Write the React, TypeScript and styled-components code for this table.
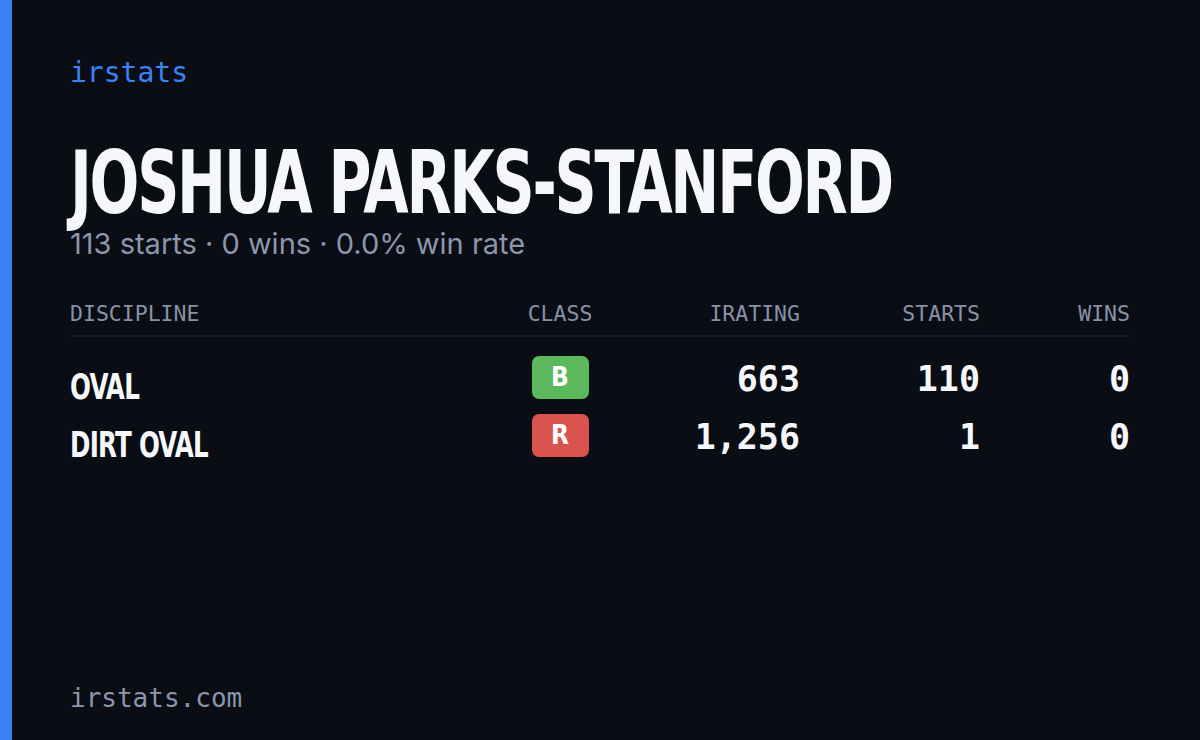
import React from "react";
import styled, { createGlobalStyle } from "styled-components";

const Global = createGlobalStyle`
  html, body { margin: 0; padding: 0; background: #0a0d14; }
  #root { width: 1200px; height: 740px; }
`;

const Frame = styled.div`
  width: 1200px;
  height: 740px;
  display: flex;
  background: #0a0d14;
  overflow: hidden;
`;

const Accent = styled.div`
  width: 12px;
  flex: none;
  background: #3b82f6;
`;

const Content = styled.main`
  flex: 1;
  min-width: 0;
  display: flex;
  flex-direction: column;
  padding: 56px 70px 26px 58px;
`;

const Brand = styled.div`
  font-family: "DejaVu Sans Mono", "Liberation Mono", monospace;
  font-size: 28px;
  color: #3b82f6;
  line-height: 34px;
`;

const Condensed = `
  font-family: "Liberation Sans Narrow", "DejaVu Sans Condensed", "Roboto Condensed", "Liberation Sans", sans-serif;
  font-weight: 700;
  display: inline-block;
  transform-origin: left center;
  white-space: nowrap;
`;

const TitleWrap = styled.div`
  width: 100%;
  min-width: 0;
`;

const Title = styled.h1`
  ${Condensed}
  margin: 49px 0 0 0;
  font-size: 88px;
  line-height: 88px;
  color: #f5f7fa;
  transform: scaleX(0.74);
  letter-spacing: -3px;
`;

const Summary = styled.p`
  margin: 0;
  font-family: Inter, "Open Sans", sans-serif;
  font-size: 29px;
  line-height: 34px;
  color: #8a97ad;
`;

const Table = styled.div`
  margin-top: 30px;
  width: 1060px;
  display: flex;
  flex-direction: column;
`;

const Row = styled.div<{ $head?: boolean }>`
  display: grid;
  grid-template-columns: 430px 120px 180px 180px 150px;
  align-items: center;
  height: ${(p) => (p.$head ? "44px" : "58px")};
  border-bottom: ${(p) => (p.$head ? "2px solid #181d28" : "none")};
  margin-bottom: ${(p) => (p.$head ? "10px" : "0")};
`;

const HeadCell = styled.div<{ $align: "left" | "center" | "right" }>`
  font-family: "DejaVu Sans Mono", "Liberation Mono", monospace;
  font-size: 21.5px;
  color: #8792a6;
  text-align: ${(p) => p.$align};
`;

const Discipline = styled.div`
  ${Condensed}
  font-size: 36px;
  color: #f5f7fa;
  transform: scaleX(0.76);
  letter-spacing: -1px;
  padding-top: 19px;
`;

const ClassCell = styled.div`
  display: flex;
  justify-content: center;
`;

const Badge = styled.span<{ $color: string }>`
  width: 57px;
  height: 43px;
  border-radius: 7px;
  background: ${(p) => p.$color};
  color: #ffffff;
  display: flex;
  align-items: center;
  justify-content: center;
  font-family: "DejaVu Sans Condensed", "Liberation Sans", sans-serif;
  font-weight: 700;
  font-size: 26px;
`;

const Num = styled.div`
  font-family: "DejaVu Sans Mono", "Liberation Mono", monospace;
  font-size: 35px;
  font-weight: 600;
  color: #f5f7fa;
  text-align: right;
  padding-top: 4px;
`;

const Footer = styled.div`
  margin-top: auto;
  font-family: "DejaVu Sans Mono", "Liberation Mono", monospace;
  font-size: 26px;
  color: #8a97ad;
  line-height: 32px;
`;

const rows = [
  { name: "OVAL", cls: "B", color: "#5cb85c", irating: "663", starts: "110", wins: "0" },
  { name: "DIRT OVAL", cls: "R", color: "#d9534f", irating: "1,256", starts: "1", wins: "0" },
];

export default function App() {
  return (
    <>
      <Global />
      <Frame>
        <Accent />
        <Content>
          <Brand>irstats</Brand>
          <TitleWrap>
            <Title>JOSHUA PARKS-STANFORD</Title>
          </TitleWrap>
          <Summary>113 starts · 0 wins · 0.0% win rate</Summary>
          <Table>
            <Row $head>
              <HeadCell $align="left">DISCIPLINE</HeadCell>
              <HeadCell $align="center">CLASS</HeadCell>
              <HeadCell $align="right">IRATING</HeadCell>
              <HeadCell $align="right">STARTS</HeadCell>
              <HeadCell $align="right">WINS</HeadCell>
            </Row>
            {rows.map((r) => (
              <Row key={r.name}>
                <div>
                  <Discipline>{r.name}</Discipline>
                </div>
                <ClassCell>
                  <Badge $color={r.color}>{r.cls}</Badge>
                </ClassCell>
                <Num>{r.irating}</Num>
                <Num>{r.starts}</Num>
                <Num>{r.wins}</Num>
              </Row>
            ))}
          </Table>
          <Footer>irstats.com</Footer>
        </Content>
      </Frame>
    </>
  );
}
